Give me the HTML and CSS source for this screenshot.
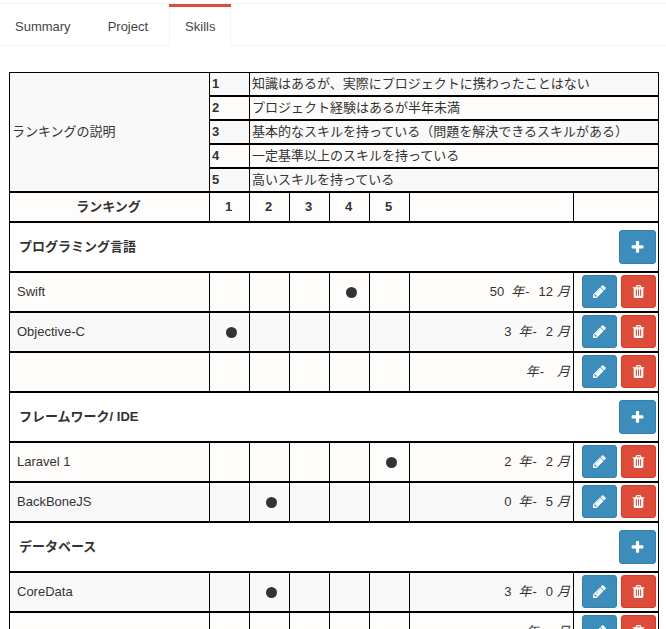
FILE: index.html
```html
<!DOCTYPE html>
<html lang="ja">
<head>
<meta charset="utf-8">
<title>Skills</title>
<link rel="stylesheet" href="styles.css">
</head>
<body>
<svg class="sprite" aria-hidden="true">
  <symbol id="plus" viewBox="0 0 1792 1792"><path d="M1600 736v192q0 40-28 68t-68 28h-416v416q0 40-28 68t-68 28h-192q-40 0-68-28t-28-68v-416h-416q-40 0-68-28t-28-68v-192q0-40 28-68t68-28h416v-416q0-40 28-68t68-28h192q40 0 68 28t28 68v416h416q40 0 68 28t28 68z"/></symbol>
  <symbol id="pencil" viewBox="0 0 1792 1792"><path d="M491 1536l91-91-235-235-91 91v107h128v128h107zm523-928q0-22-22-22-10 0-17 7l-542 542q-7 7-7 17 0 22 22 22 10 0 17-7l542-542q7-7 7-17zm-54-192l416 416-832 832h-416v-416zm683 96q0 53-37 90l-166 166-416-416 166-165q36-38 90-38 53 0 91 38l235 234q37 39 37 91z"/></symbol>
  <symbol id="trash" viewBox="0 0 1792 1792"><path d="M704 1376v-704q0-14-9-23t-23-9h-64q-14 0-23 9t-9 23v704q0 14 9 23t23 9h64q14 0 23-9t9-23zm256 0v-704q0-14-9-23t-23-9h-64q-14 0-23 9t-9 23v704q0 14 9 23t23 9h64q14 0 23-9t9-23zm256 0v-704q0-14-9-23t-23-9h-64q-14 0-23 9t-9 23v704q0 14 9 23t23 9h64q14 0 23-9t9-23zm-544-992h448l-48-117q-7-9-17-11h-317q-10 2-17 11zm928 32v64q0 14-9 23t-23 9h-96v948q0 83-47 143.5t-113 60.5h-832q-66 0-113-58.5t-47-141.5v-952h-96q-14 0-23-9t-9-23v-64q0-14 9-23t23-9h309l70-167q15-37 54-63t79-26h320q40 0 79 26t54 63l70 167h309q14 0 23 9t9 23z"/></symbol>
</svg>
<nav class="tabs">
  <a class="tab" href="#summary">Summary</a>
  <a class="tab" href="#project">Project</a>
  <a class="tab active" href="#skills" aria-current="page">Skills</a>
</nav>
<main class="content">
<table class="skills">
  <colgroup>
    <col class="col-name"><col class="col-rank"><col class="col-rank"><col class="col-rank"><col class="col-rank"><col class="col-rank"><col><col class="col-actions">
  </colgroup>
  <tbody>
    <tr class="legend"><td rowspan="5">ランキングの説明</td><th>1</th><td colspan="6">知識はあるが、実際にプロジェクトに携わったことはない</td></tr>
    <tr class="legend"><th>2</th><td colspan="6">プロジェクト経験はあるが半年未満</td></tr>
    <tr class="legend"><th>3</th><td colspan="6">基本的なスキルを持っている（問題を解決できるスキルがある）</td></tr>
    <tr class="legend"><th>4</th><td colspan="6">一定基準以上のスキルを持っている</td></tr>
    <tr class="legend"><th>5</th><td colspan="6">高いスキルを持っている</td></tr>
    <tr class="ranks"><th>ランキング</th><th>1</th><th>2</th><th>3</th><th>4</th><th>5</th><th></th><th></th></tr>
    <tr class="section"><th colspan="8"><div class="section-bar">プログラミング言語<button class="btn add" type="button" aria-label="追加"><svg><use href="#plus"/></svg></button></div></th></tr>
    <tr class="skill"><td>Swift</td><td></td><td></td><td></td><td><span class="dot"></span></td><td></td><td class="period"><span class="years">50</span><em>年</em>-<span class="months">12</span><em>月</em></td><td class="actions"><div class="action-bar"><button class="btn" type="button" aria-label="編集"><svg><use href="#pencil"/></svg></button><button class="btn danger" type="button" aria-label="削除"><svg><use href="#trash"/></svg></button></div></td></tr>
    <tr class="skill"><td>Objective-C</td><td><span class="dot"></span></td><td></td><td></td><td></td><td></td><td class="period"><span class="years">3</span><em>年</em>-<span class="months">2</span><em>月</em></td><td class="actions"><div class="action-bar"><button class="btn" type="button" aria-label="編集"><svg><use href="#pencil"/></svg></button><button class="btn danger" type="button" aria-label="削除"><svg><use href="#trash"/></svg></button></div></td></tr>
    <tr class="skill"><td></td><td></td><td></td><td></td><td></td><td></td><td class="period"><span class="years"></span><em>年</em>-<span class="months"></span><em>月</em></td><td class="actions"><div class="action-bar"><button class="btn" type="button" aria-label="編集"><svg><use href="#pencil"/></svg></button><button class="btn danger" type="button" aria-label="削除"><svg><use href="#trash"/></svg></button></div></td></tr>
    <tr class="section"><th colspan="8"><div class="section-bar">フレームワーク/ IDE<button class="btn add" type="button" aria-label="追加"><svg><use href="#plus"/></svg></button></div></th></tr>
    <tr class="skill"><td>Laravel 1</td><td></td><td></td><td></td><td></td><td><span class="dot"></span></td><td class="period"><span class="years">2</span><em>年</em>-<span class="months">2</span><em>月</em></td><td class="actions"><div class="action-bar"><button class="btn" type="button" aria-label="編集"><svg><use href="#pencil"/></svg></button><button class="btn danger" type="button" aria-label="削除"><svg><use href="#trash"/></svg></button></div></td></tr>
    <tr class="skill"><td>BackBoneJS</td><td></td><td><span class="dot"></span></td><td></td><td></td><td></td><td class="period"><span class="years">0</span><em>年</em>-<span class="months">5</span><em>月</em></td><td class="actions"><div class="action-bar"><button class="btn" type="button" aria-label="編集"><svg><use href="#pencil"/></svg></button><button class="btn danger" type="button" aria-label="削除"><svg><use href="#trash"/></svg></button></div></td></tr>
    <tr class="section"><th colspan="8"><div class="section-bar">データベース<button class="btn add" type="button" aria-label="追加"><svg><use href="#plus"/></svg></button></div></th></tr>
    <tr class="skill"><td>CoreData</td><td></td><td><span class="dot"></span></td><td></td><td></td><td></td><td class="period"><span class="years">3</span><em>年</em>-<span class="months">0</span><em>月</em></td><td class="actions"><div class="action-bar"><button class="btn" type="button" aria-label="編集"><svg><use href="#pencil"/></svg></button><button class="btn danger" type="button" aria-label="削除"><svg><use href="#trash"/></svg></button></div></td></tr>
    <tr class="skill"><td></td><td></td><td></td><td></td><td></td><td></td><td class="period"><span class="years"></span><em>年</em>-<span class="months"></span><em>月</em></td><td class="actions"><div class="action-bar"><button class="btn" type="button" aria-label="編集"><svg><use href="#pencil"/></svg></button><button class="btn danger" type="button" aria-label="削除"><svg><use href="#trash"/></svg></button></div></td></tr>
  </tbody>
</table>
</main>
</body>
</html>
```
FILE: styles.css
```css
* {
  box-sizing: border-box;
}

body {
  margin: 0;
  padding-top: 3px;
  background: #fff;
  color: #333;
  font-family: "Liberation Sans", "Noto Sans CJK JP", sans-serif;
  font-size: 13px;
  line-height: 18px;
}

.sprite {
  display: none;
}

/* Tabs */
.tabs {
  display: flex;
  gap: 5px;
  height: 43px;
  border-top: 1px solid #f4f4f4;
  box-shadow: inset 0 -1px #f4f4f4;
}

.tab {
  padding: 14px 16px 0;
  color: #444;
  text-decoration: none;
}

.tab:first-child {
  padding-left: 15px;
}

.tab.active {
  background:
    linear-gradient(#dd4b39, #dd4b39) top / 100% 3px no-repeat,
    linear-gradient(#f4f4f4, #f4f4f4) left / 1px 100% no-repeat,
    linear-gradient(#f4f4f4, #f4f4f4) right / 1px 100% no-repeat,
    #fff;
}

/* Table */
.content {
  padding: 26px 7px 20px 9px;
}

.skills {
  width: 100%;
  table-layout: fixed;
  border: solid #000;
  border-width: 1px 0 0 1px;
  border-collapse: separate;
  border-spacing: 0;
}

.col-name {
  width: 200px;
}

.col-rank {
  width: 40px;
}

.col-actions {
  width: 85px;
}

.skills th,
.skills td {
  padding: 0 2px;
  border: solid #000;
  border-width: 0 1px 2px 0;
  text-align: left;
  vertical-align: middle;
}

.skills tr {
  background: #fefdfb;
}

.skills tr:nth-child(odd) {
  background: #f9f9f9;
}

.skills tr.section {
  background: #fff;
}

.legend {
  height: 24px;
}

.ranks {
  height: 30px;
}

.section {
  height: 50px;
}

.skill {
  height: 40px;
}

.skills .ranks th {
  padding: 0 3px 0 1px;
  text-align: center;
}

.skills .skill td {
  padding: 0 3px 0 7px;
}

.skills .skill .actions {
  padding: 0 2px 1px;
}

.section-bar {
  display: flex;
  align-items: center;
  justify-content: space-between;
  padding-left: 7px;
}

.dot {
  display: block;
  width: 11px;
  height: 11px;
  margin: 0 auto;
  border-radius: 50%;
  background: #333;
}

.skills .period {
  text-align: right;
  white-space: nowrap;
}

.years {
  margin-right: 7px;
}

.years + em {
  margin-right: 1px;
}

.months {
  margin: 0 4px 0 9px;
}

/* Buttons */
.action-bar {
  display: flex;
  justify-content: flex-end;
  gap: 4px;
}

.btn {
  display: flex;
  align-items: center;
  justify-content: center;
  width: 35px;
  height: 33px;
  padding: 0;
  border: 1px solid #367fa9;
  border-radius: 3px;
  background: #3c8dbc;
  color: #fff;
  cursor: pointer;
}

.btn.add {
  width: 37px;
  height: 34px;
}

.btn.danger {
  border-color: #d73925;
  background: #dd4b39;
}

.btn svg {
  width: 15px;
  height: 15px;
  fill: currentColor;
}
```
